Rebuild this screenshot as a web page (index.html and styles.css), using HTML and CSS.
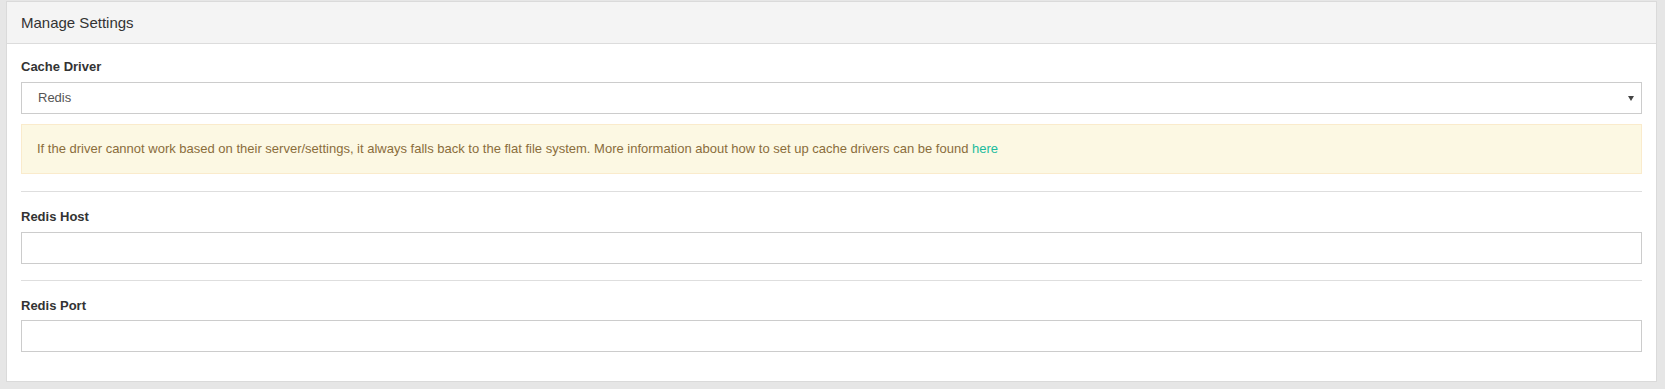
FILE: index.html
```html
<!DOCTYPE html>
<html lang="en">
<head>
  <meta charset="UTF-8" />
  <meta name="viewport" content="width=device-width, initial-scale=1.0"/>
  <title>Manage Settings</title>
  <link rel="stylesheet" href="styles.css">
</head>
<body>
  <div class="panel">
    <div class="panel-heading">Manage Settings</div>

    <div class="panel-body">
      <!-- Cache driver -->
      <div class="form-group form-group-tight">
        <label for="cacheDriver">Cache Driver</label>
        <div class="select-wrap">
          <select id="cacheDriver" class="form-control">
            <option>Redis</option>
            <option>File</option>
            <option>Memcached</option>
          </select>
        </div>
      </div>

      <div class="alert">
        If the driver cannot work based on their server/settings, it always falls back to the flat file system. More information about how to set up cache drivers can be found <a href="#">here</a>
      </div>

      <hr />

      <div class="form-group">
        <label for="redisHost">Redis Host</label>
        <input type="text" id="redisHost" class="form-control" />
      </div>

      <hr />

      <div class="form-group">
        <label for="redisPort">Redis Port</label>
        <input type="text" id="redisPort" class="form-control" />
      </div>
    </div>
  </div>
</body>
</html>
```

FILE: styles.css
```css
body {
  margin: 0;
  padding: 1px 8px 7px 6px;
  background: #e6e6e6;
  font-family: 'Liberation Sans', Arial, sans-serif;
  font-size: 13px;
  line-height: 1.42857;
  color: #333;
}

.panel {
  background: #fff;
  border: 1px solid #dadada;
}

.panel-heading {
  padding: 10px 14px;
  font-size: 15px;
  line-height: 21px;
  color: #333;
  background: #f4f4f4;
  border-bottom: 1px solid #dcdcdc;
}

.panel-body {
  padding: 14px 14px 13px;
}

.form-group {
  margin-bottom: 16px;
}

.form-group-tight {
  margin-bottom: 10px;
}

label {
  display: block;
  margin-bottom: 5px;
  font-weight: bold;
  color: #333;
}

.form-control {
  display: block;
  box-sizing: border-box;
  width: 100%;
  height: 32px;
  margin: 0;
  padding: 0 16px;
  font-family: inherit;
  font-size: 13px;
  color: #555;
  background: #fff;
  border: 1px solid #ccc;
  border-radius: 0;
  outline: none;
}

.select-wrap {
  position: relative;
}

select.form-control {
  -webkit-appearance: none;
  appearance: none;
}

.select-wrap::after {
  content: "";
  position: absolute;
  top: 14px;
  right: 8px;
  border-left: 3px solid transparent;
  border-right: 3px solid transparent;
  border-top: 5px solid #444;
  pointer-events: none;
}

.alert {
  margin: 0 0 17px;
  padding: 15px;
  color: #8a6d3b;
  background: #fcf8e3;
  border: 1px solid #faebcc;
}

.alert a {
  color: #1abb9c;
  text-decoration: none;
}

hr {
  height: 0;
  margin: 0 0 16px;
  border: 0;
  border-top: 1px solid #dedede;
}
```
